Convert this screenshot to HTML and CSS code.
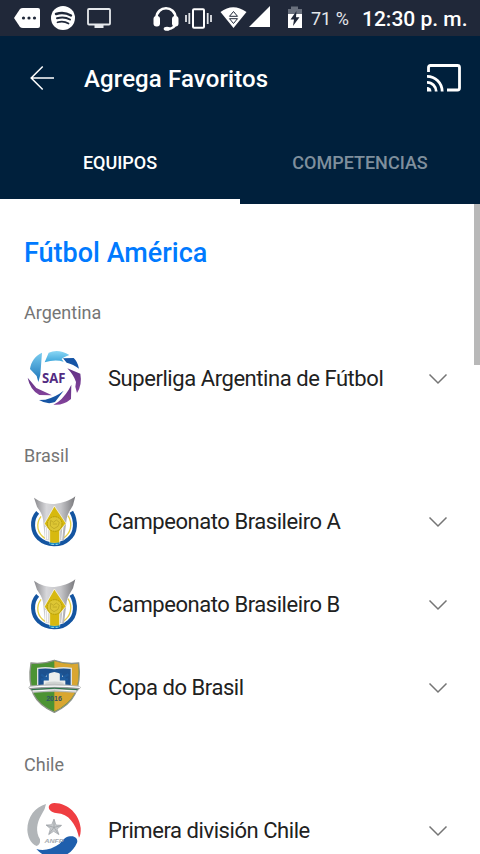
FILE: index.html
```html
<!DOCTYPE html>
<html lang="es">
<head>
<meta charset="utf-8">
<title>Agrega Favoritos</title>
<link rel="stylesheet" href="styles.css">
</head>
<body>
<svg class="defs" width="0" height="0">
  <defs>
    <linearGradient id="sky" x2="0" y2="1"><stop stop-color="#8bd7f5"/><stop offset="1" stop-color="#3ba5da"/></linearGradient>
    <linearGradient id="blue" x2="0" y2="1"><stop stop-color="#7acdf0"/><stop offset="1" stop-color="#1972b8"/></linearGradient>
    <linearGradient id="purple" x2="0" y2="1"><stop stop-color="#603285"/><stop offset="1" stop-color="#84439b"/></linearGradient>
    <linearGradient id="silver"><stop stop-color="#88888c"/><stop offset=".3" stop-color="#d7d7da"/><stop offset=".65" stop-color="#c5c5c8"/><stop offset="1" stop-color="#77777b"/></linearGradient>
    <linearGradient id="steel" x2="0" y2="1"><stop stop-color="#c8cacc"/><stop offset=".5" stop-color="#8d9192"/><stop offset="1" stop-color="#d0d2d2"/></linearGradient>
    <symbol id="brasileirao" viewBox="0 -15 240 249">
      <path d="M68 82C48 103 50 142 72 161C95 183 138 184 161 162C184 144 185 107 169 80" fill="none" stroke="#1455a1" stroke-width="12"/>
      <path d="M78 94C61 117 67 146 90 160M159 92C175 117 167 146 144 160" fill="none" stroke="#e8d044" stroke-width="4"/>
      <path d="M57 38C76 52 98 57 119 57C141 54 163 48 181 34L174 61C166 75 158 85 155 101L147 166H134L131 110H107L104 166H90L84 103C82 86 73 76 66 65Z" fill="url(#silver)"/>
      <path d="M92 126V164M98 126V163M144 124L140 164" stroke="#fff" stroke-width="3" fill="none"/>
      <path d="M118 63L153 115L134 138V175H104V138L88 116Z" fill="#d7b90f" stroke="#fff" stroke-width="2"/>
      <circle cx="119" cy="117" r="22" fill="#ddc634" stroke="#b59c0a" stroke-width="3" stroke-dasharray="5 2"/>
      <path d="M107 106L115 112L124 105L133 112L129 124L117 131L106 123ZM113 117H126" fill="none" stroke="#b59f20" stroke-width="2"/>
      <path d="M102 172Q118 176 134 172L132 180H106Z" fill="#188bc1"/>
      <path d="M109 178H117M122 178H128" stroke="#9bd5e8" stroke-width="3"/>
    </symbol>
    <symbol id="chevron" viewBox="0 0 20 12"><path d="M1.500 1.500L10 10L18.500 1.500" fill="none" stroke="#757575" stroke-width="1.500"/></symbol>
  </defs>
</svg>
<header class="header">
  <div class="status">
    <svg class="status-icons" width="305" height="36" viewBox="0 0 305 36" fill="#fff">
      <path d="M14 18L20 9Q21 8 23 8H38Q40 8 40 10V26Q40 28 38 28H23Q21 28 20 27Z"/>
      <g fill="#202839"><circle cx="23.500" cy="18" r="1.600"/><circle cx="29" cy="18" r="1.600"/><circle cx="34.500" cy="18" r="1.600"/></g>
      <circle cx="63" cy="18" r="12"/>
      <g fill="none" stroke="#202839" stroke-linecap="round"><path d="M56 14Q64 11.500 71 15.500" stroke-width="2.400"/><path d="M57 18.300Q64 16 70 19.500" stroke-width="2"/><path d="M57.500 22.300Q63.500 20.500 68.500 23.500" stroke-width="1.700"/></g>
      <rect x="88" y="9" width="22" height="15.500" rx="1" fill="none" stroke="#e6e9ed" stroke-width="1.800"/><path d="M94.500 24H103.500V28H94.500Z" fill="#e6e9ed"/>
      <path d="M156.500 18C156.500 5 175.500 5 175.500 18M175.500 23Q175 29 167 29" fill="none" stroke="#fff" stroke-width="2.600"/>
      <rect x="153.500" y="16" width="6.500" height="10.500" rx="3"/><rect x="172" y="16" width="6.500" height="10.500" rx="3"/><ellipse cx="167" cy="28.800" rx="3.300" ry="2"/>
      <rect x="193" y="9.200" width="11" height="18.600" rx="1" fill="none" stroke="#fff" stroke-width="2"/>
      <path d="M186 15V22M189.300 13V24M207.700 13V24M211 15V22" stroke="#e0e3e7" stroke-width="1.800"/>
      <path d="M220.500 12Q233 2.500 246.500 12L233.500 28Z"/><path d="M229.500 16.300L233.500 11.500L237.500 16.300ZM229.500 18.700H237.500L233.500 23.500Z" fill="#fff" stroke="#202839" stroke-width="1"/>
      <path d="M249 27L270 6V27Z"/>
      <path d="M288 14V9H291V6.500H298V9H302V14Z" fill="#69707d"/><path d="M288 14H302V28H288Z"/><path d="M296.500 11L290.500 19.500H294L293 26L299.500 17.300H296Z" fill="#202839"/>
    </svg>
    <span class="battery">71 %</span>
    <span class="clock">12:30 p. m.</span>
  </div>
  <div class="appbar">
    <svg class="back" width="26" height="26" viewBox="0 0 26 26" fill="none" stroke="#fff" stroke-width="1.500"><path d="M25 13H2M13.700 1.500L2.200 13L13.700 24.500"/></svg>
    <h1 class="title">Agrega Favoritos</h1>
    <svg class="cast" width="36" height="30" viewBox="0 0 36 30" fill="none" stroke="#fff" stroke-width="2.800"><path d="M2.500 9V4.500Q2.500 2.500 4.500 2.500H31.500Q33.500 2.500 33.500 4.500V25Q33.500 27 31.500 27H21"/><path d="M1 13.300A15.200 15.200 0 0 1 16.200 28.500M1 19.300A9.200 9.200 0 0 1 10.200 28.500"/><path d="M1 24A4.500 4.500 0 0 1 5.500 28.500H1Z" fill="#fff" stroke="none"/></svg>
  </div>
  <nav class="tabs">
    <div class="tab active"><span>EQUIPOS</span></div>
    <div class="tab"><span>COMPETENCIAS</span></div>
  </nav>
</header>
<main class="content">
  <div class="scrollbar"></div>
  <h2 class="section">Fútbol América</h2>
  <h3 class="country">Argentina</h3>
  <div class="row">
    <svg class="logo" viewBox="0 -9 240 249">
      <path d="M81 38L76 104L70 126L65 108L45 87C48 65 61 46 81 38Z" fill="url(#blue)"/>
      <path d="M89 67L101 38Q130 25 163 45L147 52L140 57L146 65Q120 57 89 67Z" fill="url(#sky)"/>
      <path d="M144 55L176 54Q188 65 192 86Q175 72 155 68Z" fill="#1655a6"/>
      <path d="M157 85L196 101Q202 134 186 159L181 140L183 126Q176 105 157 85Z" fill="url(#purple)"/>
      <path d="M169 134L168 177Q145 197 115 194L129 186Q154 166 169 134Z" fill="url(#purple)"/>
      <path d="M146 152L120 186Q97 195 72 180L91 179Q122 171 146 152Z" fill="#1755a4"/>
      <path d="M38 113L64 144L111 166L73 165Q45 149 38 113Z" fill="url(#purple)"/>
      <text class="saf" x="116" y="129" textLength="70" lengthAdjust="spacingAndGlyphs">SAF</text>
    </svg>
    <span class="name">Superliga Argentina de Fútbol</span>
    <svg class="chevron"><use href="#chevron"/></svg>
  </div>
  <h3 class="country">Brasil</h3>
  <div class="row">
    <svg class="logo"><use href="#brasileirao"/></svg>
    <span class="name">Campeonato Brasileiro A</span>
    <svg class="chevron"><use href="#chevron"/></svg>
  </div>
  <div class="row">
    <svg class="logo"><use href="#brasileirao"/></svg>
    <span class="name">Campeonato Brasileiro B</span>
    <svg class="chevron"><use href="#chevron"/></svg>
  </div>
  <div class="row">
    <svg class="logo" viewBox="0 -12 240 249">
      <path d="M118 31Q153 44 191 39Q198 94 180 132Q164 165 118 187Q71 166 55 132Q39 91 48 39Q86 43 118 31Z" fill="#4c9333" stroke="#8d9389" stroke-width="4"/>
      <path d="M118 33Q154 46 189 41Q196 95 178 131Q162 162 118 184Z" fill="#d9a631"/>
      <path d="M68 105V55Q94 51 118 56Q143 51 169 55V105" fill="#1c518f" stroke="#e0e3df" stroke-width="4"/>
      <path d="M86 92Q90 70 118 66Q146 70 151 92V110H86Z" fill="#eceeed"/>
      <path d="M78 73L98 88M98 70V88H78M160 73L138 88M138 70V88H159" fill="none" stroke="#1d5b9e" stroke-width="7"/>
      <path d="M91 98Q118 91 146 98V111H91Z" fill="#d1d4d3"/>
      <path d="M45 107Q118 98 191 107L197 112L183 128Q118 122 54 128L41 113Z" fill="url(#steel)" stroke="#a0a5a1" stroke-width="1"/>
      <path d="M43 112Q118 105 195 112" fill="none" stroke="#fff" stroke-width="4"/><path d="M49 119Q118 110 188 119" fill="none" stroke="#277543" stroke-width="3"/><path d="M54 123Q118 116 183 123" fill="none" stroke="#fff" stroke-width="3"/>
      <text class="year" x="117" y="152" textLength="47" lengthAdjust="spacingAndGlyphs">2016</text>
    </svg>
    <span class="name">Copa do Brasil</span>
    <svg class="chevron"><use href="#chevron"/></svg>
  </div>
  <h3 class="country">Chile</h3>
  <div class="row">
    <svg class="logo" viewBox="0 -18 240 249">
      <path d="M93 27Q91 43 79 60C65 84 61 110 75 133Q77 148 65 153C47 147 38 125 37 105C37 65 61 36 93 27Z" fill="#b1b5b8"/>
      <path d="M118 24C161 25 193 59 197 99Q198 118 192 128C187 101 170 64 138 56Q115 56 105 46C97 35 103 25 118 24Z" fill="#ef3e42"/>
      <path d="M64 162Q97 172 134 146C144 134 151 126 165 124C181 121 190 133 186 143C165 194 99 203 64 162Z" fill="#1f5fad"/>
      <path d="M117 72L123 90L140 91L126 102L132 119L116 109L101 119L106 101L93 90L110 89Z" fill="#c7cacd" stroke="#a0a4a9" stroke-width="2"/><path d="M117 74V97L138 92M117 97L130 117M117 97L102 117M117 97L95 91" fill="none" stroke="#959a9f" stroke-width="2"/>
      <text class="anfp" x="117" y="143" textLength="57" lengthAdjust="spacingAndGlyphs">ANFP</text>
    </svg>
    <span class="name">Primera división Chile</span>
    <svg class="chevron"><use href="#chevron"/></svg>
  </div>
</main>
</body>
</html>
```
FILE: styles.css
```css
* { box-sizing: border-box; }
body { margin: 0; height: 854px; overflow: hidden; background: #fff; font-family: Roboto, "Liberation Sans", sans-serif; color: #212121; }
svg { display: block; flex: none; }
.defs { position: absolute; }
h1, h2, h3 { margin: 0; }
.header { height: 204px; background: #00203c; color: #fff; }
.status { height: 36px; display: flex; align-items: center; background: #202839; white-space: nowrap; }
.battery { margin-left: 6px; width: 51px; padding-top: 1px; font-size: 18px; color: #e4e7eb; }
.clock { font-size: 21px; font-weight: 500; padding-top: 2px; }
.appbar { height: 84px; display: flex; align-items: center; padding: 0 18px 0 29px; }
.title { margin-left: 29px; padding-top: 2px; font-size: 24px; font-weight: 500; letter-spacing: .12px; white-space: nowrap; }
.cast { margin-left: auto; }
.tabs { display: flex; height: 84px; }
.tab { width: 50%; height: 84px; display: flex; align-items: center; justify-content: center; font-size: 18px; font-weight: 500; color: #7f8f9d; }
.active { color: #fff; border-bottom: 5px solid #fff; padding-top: 5px; }
.content { position: relative; height: 650px; overflow: hidden; }
.scrollbar { position: absolute; right: 0; top: 0; width: 6px; height: 161px; background: #b8b8b8; }
.section { height: 73px; padding: 33px 24px 0; line-height: 32px; font-size: 27px; font-weight: 500; color: #007aff; }
.country { height: 60px; padding: 25px 24px 0; line-height: 22px; font-size: 18px; font-weight: 400; color: #757575; }
.row { height: 83px; display: flex; align-items: center; padding: 0 32px 0 15px; }
.logo { width: 80px; height: 83px; }
.name { margin-left: 13px; font-size: 22px; letter-spacing: -.44px; white-space: nowrap; }
.chevron { width: 20px; height: 12px; margin-left: auto; }
.saf { font: 700 43px "Open Sans", sans-serif; fill: #522b82; text-anchor: middle; }
.year { font: 700 19px "Liberation Sans", sans-serif; fill: #31526a; text-anchor: middle; }
.anfp { font: italic 700 15px "Liberation Sans", sans-serif; fill: #a6abb0; text-anchor: middle; }
```
